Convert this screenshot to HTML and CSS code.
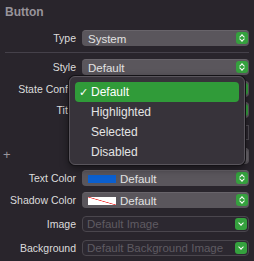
FILE: index.html
```html
<!DOCTYPE html>
<html lang="en">

<head>
  <meta charset="UTF-8">
  <meta name="viewport" content="width=device-width, initial-scale=1.0">
  <link rel="stylesheet" href="styles.css">
  <title>Button inspector</title>
</head>

<body>

  <div id="inspector">
    <div class="section-title">Button</div>

    <div class="row">
      <div class="label">Type</div>
      <div class="popup"><span class="value">System</span><span class="stepper"></span></div>
    </div>

    <div class="separator"></div>

    <div class="row">
      <div class="label">Style</div>
      <div class="popup"><span class="value">Default</span><span class="stepper"></span></div>
    </div>

    <!-- rows below are mostly hidden by the open menu -->
    <div class="row">
      <div class="label-clip"><span class="label-inner">State Config</span></div>
      <div class="popup"><span class="stepper"></span></div>
    </div>

    <div class="row row-tight">
      <div class="label-clip"><span class="label-inner">Title</span></div>
      <div class="popup"><span class="stepper"></span></div>
    </div>

    <div class="row">
      <div class="label"></div>
      <div class="text-field"></div>
    </div>

    <div class="row row-loose">
      <div class="label label-plus">+</div>
      <div class="popup"><span class="stepper stepper-gray"></span></div>
    </div>

    <div class="row">
      <div class="label">Text Color</div>
      <div class="popup"><span class="swatch swatch-blue"></span><span class="value">Default</span><span class="stepper"></span></div>
    </div>

    <div class="row">
      <div class="label">Shadow Color</div>
      <div class="popup"><span class="swatch swatch-none"></span><span class="value">Default</span><span class="stepper"></span></div>
    </div>

    <div class="row row-loose">
      <div class="label">Image</div>
      <div class="popup popup-disabled"><span class="value">Default Image</span><span class="stepper stepper-down"></span></div>
    </div>

    <div class="row row-loose">
      <div class="label">Background</div>
      <div class="popup popup-disabled"><span class="value">Default Background Image</span><span class="stepper stepper-down"></span></div>
    </div>

    <div id="state-menu">
      <div class="menu-item active"><span class="check">✓</span>Default</div>
      <div class="menu-item"><span class="check"></span>Highlighted</div>
      <div class="menu-item"><span class="check"></span>Selected</div>
      <div class="menu-item"><span class="check"></span>Disabled</div>
    </div>
  </div>

</body>

</html>
```

FILE: styles.css
```css
body {
  background-color: #29252c;
  margin: 0;
  font-family: 'Liberation Sans', Arial, sans-serif;
  color: #dcdcdc;
}

#inspector {
  position: relative;
  width: 254px;
  height: 261px;
  overflow: hidden;
}

.section-title {
  height: 24px;
  line-height: 24px;
  padding-left: 5px;
  font-size: 12px;
  font-weight: bold;
  color: #98949b;
}

.row {
  display: flex;
  align-items: center;
  margin-top: 6px;
  height: 16px;
}

.row-tight {
  margin-top: 5px;
}

.row-loose {
  margin-top: 8px;
}

.label {
  width: 76px;
  margin-right: 6px;
  text-align: right;
  font-size: 10.5px;
  white-space: nowrap;
  flex-shrink: 0;
}

.label-clip {
  width: 69px;
  margin-right: 13px;
  overflow: hidden;
  flex-shrink: 0;
}

.label-inner {
  display: block;
  width: 76px;
  text-align: right;
  font-size: 10.5px;
  white-space: nowrap;
}

.label-plus {
  text-align: left;
  padding-left: 3px;
  width: 73px;
  font-size: 13px;
  color: #9a969c;
  position: relative;
  top: -2px;
}

.popup {
  position: relative;
  display: flex;
  align-items: center;
  width: 167px;
  height: 16px;
  box-sizing: border-box;
  padding-left: 6px;
  background-color: #5a565c;
  border-top: 1px solid #68646a;
  border-radius: 4px;
  font-size: 11.5px;
  color: #e2e2e2;
}

.popup-disabled {
  background-color: #2c2830;
  border: 1px solid #4a464d;
  padding-left: 4px;
  color: #5f5b62;
}

.stepper {
  position: absolute;
  right: 1px;
  top: 1px;
  width: 12px;
  height: 12px;
  border-radius: 3px;
  background-color: #35a13e;
}

.stepper::before,
.stepper::after {
  content: "";
  position: absolute;
  left: 4px;
  width: 3px;
  height: 3px;
  border-left: 1px solid #fff;
  border-top: 1px solid #fff;
}

.stepper::before {
  top: 3px;
  transform: rotate(45deg);
}

.stepper::after {
  top: 5px;
  transform: rotate(225deg);
}

.stepper-down::before {
  display: none;
}

.stepper-down::after {
  top: 3px;
}

.stepper-gray {
  background-color: #6a666c;
}

.swatch {
  width: 28px;
  height: 8px;
  margin-right: 4px;
  flex-shrink: 0;
}

.swatch-blue {
  background-color: #0b5fcf;
}

.swatch-none {
  background: linear-gradient(to top right, #fff calc(50% - 0.7px), #e33 50%, #fff calc(50% + 0.7px));
}

.separator {
  height: 1px;
  margin: 6px 5px 0 5px;
  background-color: #45414a;
}

.text-field {
  width: 167px;
  height: 15px;
  box-sizing: border-box;
  border: 1px solid #4f4b52;
  background-color: #2b272e;
}

#state-menu {
  position: absolute;
  left: 69px;
  top: 76px;
  width: 176px;
  height: 89px;
  box-sizing: border-box;
  padding: 5px 5px 4px 5px;
  background-color: #37333a;
  border: 1px solid #59555c;
  border-radius: 6px;
  box-shadow: 0 0 0 1px #141216, 0 3px 8px rgba(0, 0, 0, 0.5);
}

.menu-item {
  display: flex;
  align-items: center;
  height: 20px;
  padding-left: 4px;
  border-radius: 4px;
  font-size: 12px;
  color: #e4e4e4;
}

.menu-item.active {
  background-color: #309b39;
  color: #fff;
}

.check {
  width: 12px;
  font-family: 'DejaVu Sans', sans-serif;
  font-size: 11px;
}
```
